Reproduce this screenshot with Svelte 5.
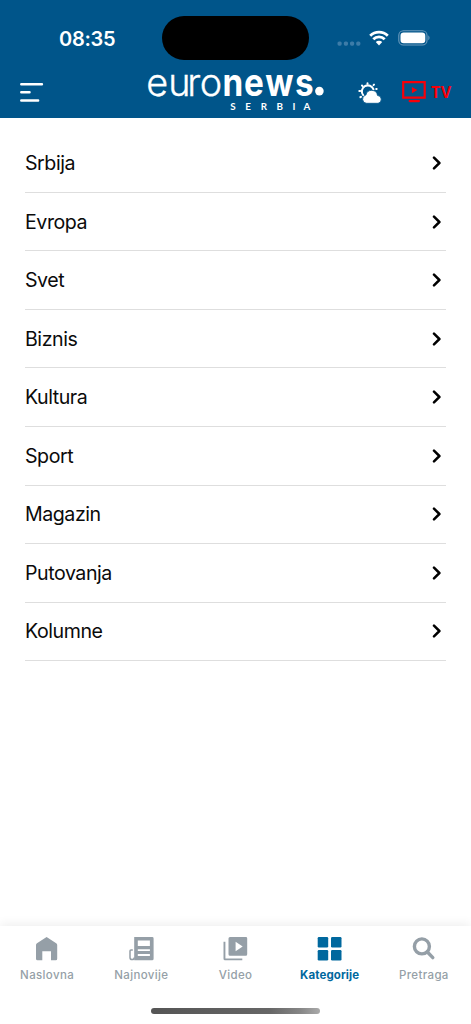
<script>
  const categories = ['Srbija', 'Evropa', 'Svet', 'Biznis', 'Kultura', 'Sport', 'Magazin', 'Putovanja', 'Kolumne'];
  const tabs = [
    { id: 'home', label: 'Naslovna' },
    { id: 'news', label: 'Najnovije' },
    { id: 'video', label: 'Video' },
    { id: 'grid', label: 'Kategorije' },
    { id: 'search', label: 'Pretraga' }
  ];
  let active = $state('grid');
</script>

<div class="screen">
  <header>
    <div class="status">
      <span class="time">08:35</span>
      <div class="island"></div>
      <div class="indicators">
        <svg class="dots" width="24" height="6" viewBox="0 0 24 6" fill="#3d7ca8">
          <rect x="0.5" y="0.5" width="4.2" height="4.2" rx="1.6" /><rect x="6.8" y="0.5" width="4.2" height="4.2" rx="1.6" />
          <rect x="13" y="0.5" width="4.2" height="4.2" rx="1.6" /><rect x="19.2" y="0.5" width="4.2" height="4.2" rx="1.6" />
        </svg>
        <svg class="wifi" width="20" height="16" viewBox="0 0 20 16" fill="none" stroke="#fff" stroke-width="2.8">
          <path d="M1.2 5.7a12.6 12.6 0 0 1 17.6 0" />
          <path d="M4.3 9.3a8.1 8.1 0 0 1 11.4 0" />
          <path d="M10 15.4 6.8 12.1a4.6 4.6 0 0 1 6.4 0z" fill="#fff" stroke="none" />
        </svg>
        <svg class="battery" width="32" height="16" viewBox="0 0 32 16">
          <rect x="0.8" y="0.8" width="28.2" height="14.2" rx="4.6" fill="none" stroke="#6b9bbd" stroke-width="1.1" />
          <rect x="2.5" y="2.5" width="24.8" height="10.8" rx="3.2" fill="#fff" />
          <path d="M30.3 5.6c1.6.7 1.6 4 0 4.7z" fill="#6b9bbd" />
        </svg>
      </div>
    </div>
    <div class="bar">
      <svg class="menu" width="24" height="21" viewBox="0 0 24 21" stroke="#fff" stroke-width="2.5" stroke-linecap="round">
        <path d="M1.3 2.2h20.6M1.3 10.2h8.2M1.3 18.4h16.8" />
      </svg>
      <svg class="logo" width="180" height="44" viewBox="0 0 180 44" fill="#fff">
        <text class="light" y="27.8" x="0.2 22.2 41.2 53.8">euro</text>
        <text class="bold" y="27.8" x="86.9 111.4 135.6 169.2" transform="scale(.88 1)">news</text>
        <circle cx="173.4" cy="23.1" r="4.3" />
        <text class="sub" y="41.8" x="84.2 99.3 114.7 130.5 146.4 157.4">SERBIA</text>
      </svg>
      <svg class="weather" width="25" height="22" viewBox="0 0 25 22">
        <g stroke="#fff" stroke-width="2" stroke-linecap="round" fill="none">
          <path d="M5.2 13.2A6 6 0 1 1 15.5 7.4" />
          <path d="M9.5 1.2v.6M4 3.5l.5.5M1.3 9h.9M2.4 15.2l.6-.4M15.5 3.1l.5-.5M18.2 7l.5-.1" />
        </g>
        <path d="M8.7 21.3a4.2 4.2 0 0 1-.8-8.3 5.9 5.9 0 0 1 11.6.4 4 4 0 0 1 .6 7.9z" fill="#fff" stroke="#00558a" stroke-width=".8" />
      </svg>
      <div class="tv">
        <svg width="25" height="23" viewBox="0 0 25 23" fill="#f70009">
          <path d="M1.2 1.2h21.5v15.4H1.2z" fill="none" stroke="#f70009" stroke-width="2.2" />
          <path d="M9.9 5.9v6.4l5.4-3.2zM7.7 19h9.2c.7 0 1.1.5 1.1 1.1s-.4 1.1-1.1 1.1H7.7c-.7 0-1.1-.5-1.1-1.1S7 19 7.7 19z" />
        </svg>
        <span>TV</span>
      </div>
    </div>
  </header>

  <main>
    {#each categories as name}
      <div class="row">
        <span>{name}</span>
        <svg width="10" height="14" viewBox="0 0 10 14" fill="none" stroke="#000" stroke-width="2.5" stroke-linecap="round" stroke-linejoin="round">
          <path d="M2 1.7 7.4 7 2 12.3" />
        </svg>
      </div>
    {/each}
  </main>

  <nav>
    <div class="tabs">
      {#each tabs as tab}
        <button class:active={active === tab.id} onclick={() => (active = tab.id)}>
          <svg width="26" height="26" viewBox="0 0 26 26" fill="currentColor">
            {#if tab.id === 'home'}
              <path d="M12.6 1 22.2 7.2q1 .7 1 1.9v13.7q0 1.5-1.5 1.5H17v-9.1H8.3v9.1H3.5q-1.5 0-1.5-1.5V9.1q0-1.2 1-1.9z" />
            {:else if tab.id === 'news'}
              <path fill-rule="evenodd" d="M6.2 1h18q1.4 0 1.4 1.4v20.4q0 1.5-1.5 1.5H6.2zM9.8 4.6v5.5h12.1V4.6zM9.8 13.2v1.9h12.1v-1.9zM9.8 18v1.9h12.1V18z" />
              <path d="M4.8 14H3q-1 0-1 1v6.4q0 2.2 2.1 2.2t2.1-2.2" fill="none" stroke="currentColor" stroke-width="1.5" />
            {:else if tab.id === 'video'}
              <path fill-rule="evenodd" d="M8 1h15.9q1.3 0 1.3 1.3v16q0 1.5-1.5 1.5H8q-1.5 0-1.5-1.5V2.5Q6.5 1 8 1zm5.6 4.8v9.5l7.1-4.8z" />
              <path d="M1.5 5.7h1.9v16.7h16.9v1.9H3q-1.5 0-1.5-1.5z" />
            {:else if tab.id === 'grid'}
              <rect x="0.7" y="1" width="10.5" height="10.4" rx="1.2" /><rect x="14" y="1" width="10.5" height="10.4" rx="1.2" />
              <rect x="0.7" y="14.1" width="10.5" height="10.4" rx="1.2" /><rect x="14" y="14.1" width="10.5" height="10.4" rx="1.2" />
            {:else}
              <g fill="none" stroke="currentColor" stroke-width="3.4" stroke-linecap="round">
                <circle cx="10.9" cy="10.4" r="7.5" /><path d="m16.4 16 5.4 5.6" />
              </g>
            {/if}
          </svg>
          <span>{tab.label}</span>
        </button>
      {/each}
    </div>
    <div class="handle"></div>
  </nav>
</div>

<style>
  :global(body) { margin: 0; background: #fff; }
  .screen { width: 471px; height: 1024px; display: flex; flex-direction: column; overflow: hidden; font-family: Inter, "Liberation Sans", sans-serif; background: #fff; }
  header { height: 117.5px; flex: none; background: #00558a; color: #fff; }
  .status { height: 60px; padding-top: 16px; box-sizing: border-box; display: grid; grid-template-columns: 162px 147px 1fr; }
  .time { padding: 11px 0 0 59px; font-size: 20px; line-height: 24px; font-weight: 600; letter-spacing: -0.3px; }
  .island { height: 43.5px; border-radius: 22px; background: #000; }
  .indicators { display: flex; align-items: flex-start; padding-left: 28px; }
  .dots { margin-top: 24.5px; }
  .wifi { margin: 13.5px 0 0 8px; }
  .battery { margin: 14px 0 0 8.5px; }
  .bar { display: flex; align-items: flex-start; padding-left: 20px; height: 57px; }
  .menu { margin-top: 21.5px; }
  .logo { margin: 8px 0 0 102px; overflow: visible; }
  .light { font: 300 37.8px Inter, sans-serif; stroke: #fff; stroke-width: .3px; }
  .bold { font: 700 37.8px Inter, sans-serif; }
  .sub { font: 700 9.8px Lato, sans-serif; }
  .weather { margin: 21.5px 0 0 32px; }
  .tv { display: flex; margin: 21px 0 0 18.5px; color: #f70009; }
  .tv span { margin: 2px 0 0 4.5px; font: 700 16px/19px "Open Sans", sans-serif; letter-spacing: .6px; }
  main { flex: 1; padding: 16.8px 25px 0; }
  .row { height: 58.55px; box-sizing: border-box; border-bottom: 1.5px solid #dedede; display: flex; align-items: center; justify-content: space-between; font-size: 19.6px; color: #0b0b0b; letter-spacing: -0.45px; }
  .row svg { margin-right: 4px; }
  nav { height: 98px; flex: none; background: #fff; box-shadow: 0 -2px 10px rgba(0, 0, 0, .07); }
  .tabs { display: grid; grid-template-columns: repeat(5, 1fr); height: 82px; }
  button { border: 0; background: none; padding: 10px 0 0; display: flex; flex-direction: column; align-items: center; color: #959fa7; font-family: inherit; font-size: 11.5px; font-weight: 500; letter-spacing: .36px; line-height: 14px; }
  button span { margin-top: 6px; }
  .active { color: #00689e; font-weight: 700; letter-spacing: .12px; }
  .handle { width: 169px; height: 6px; margin: 0 auto; border-radius: 3px; background: linear-gradient(90deg, #555, #666 70%, #858585 88%, #aaa); }
</style>
